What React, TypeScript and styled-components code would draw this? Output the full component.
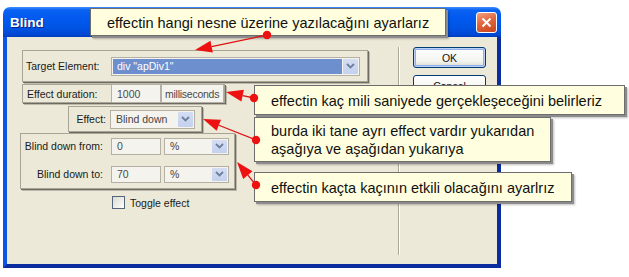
import styled, { createGlobalStyle } from 'styled-components';

const GlobalStyle = createGlobalStyle`
  html, body {
    margin: 0;
    padding: 0;
    background: #ffffff;
  }
`;

// ─── Window chrome ────────────────────────────────────────────────────────────

const Page = styled.div`
  position: relative;
  width: 629px;
  height: 277px;
  padding: 7px 0 0 3px;
  box-sizing: border-box;
  overflow: hidden;
  background: #ffffff;
  font-family: 'Liberation Sans', Arial, sans-serif;
`;

const Window = styled.div`
  width: 498px;
  height: 261px;
  display: flex;
  flex-direction: column;
  border-radius: 7px 7px 0 0;
  overflow: hidden;
`;

const TitleBar = styled.div`
  height: 30px;
  flex: none;
  display: flex;
  align-items: center;
  justify-content: space-between;
  padding: 0 4px 0 7px;
  background: linear-gradient(
    180deg,
    #3d8fff 0%,
    #0a62f2 10%,
    #0058ee 40%,
    #0054e3 70%,
    #0048d4 92%,
    #003cb8 100%
  );
`;

const Title = styled.span`
  color: #ffffff;
  font: bold 13.5px 'Liberation Sans', Arial, sans-serif;
  text-shadow: 1px 1px 0 #0a1e8c;
`;

const CloseButton = styled.div`
  width: 21px;
  height: 21px;
  box-sizing: border-box;
  border: 1px solid #ffffff;
  border-radius: 3px;
  background: linear-gradient(160deg, #f0a283 0%, #e2673f 45%, #c8431c 100%);
  display: flex;
  align-items: center;
  justify-content: center;
`;

const Frame = styled.div`
  flex: 1;
  display: flex;
  border-left: 4px solid #0b55e6;
  border-right: 4px solid #0a2c9f;
  border-bottom: 4px solid #0a2c9f;
  background: #ece9d8;
`;

const LeftCol = styled.div`
  width: 391px;
  flex: none;
  padding-top: 13px;
  box-sizing: border-box;
  font-size: 10.5px;
  color: #1a1a1a;
`;

const Separator = styled.div`
  width: 0;
  margin: 10px 0 9px;
  border-left: 1px solid #aca899;
  border-right: 1px solid #ffffff;
`;

const RightCol = styled.div`
  display: flex;
  flex-direction: column;
  gap: 7px;
  padding: 10px 0 0 13px;
`;

const Button = styled.div<{ $default?: boolean }>`
  width: 73px;
  height: 21px;
  box-sizing: border-box;
  border: 1px solid #003c74;
  border-radius: 3px;
  background: linear-gradient(180deg, #ffffff 0%, #f3f3ef 70%, #dcd8cc 100%);
  box-shadow: ${({ $default }) => ($default ? 'inset 0 0 0 1px #bcd0f5, inset 0 0 0 2px #8fb0ea' : 'none')};
  display: flex;
  align-items: center;
  justify-content: center;
  font-size: 10.5px;
  color: #111;
`;

// ─── Form parts ───────────────────────────────────────────────────────────────

const Panel = styled.div<{ $left: number; $top: number; $w: number; $h: number }>`
  margin: ${({ $top }) => $top}px 0 0 ${({ $left }) => $left}px;
  width: ${({ $w }) => $w}px;
  height: ${({ $h }) => $h}px;
  box-sizing: border-box;
  border: 1px solid #a8a597;
  box-shadow: 1px 1px 0 #6e6c62, 2px 2px 0 #bdb9aa;
  display: flex;
  align-items: center;
`;

const StackPanel = styled(Panel)`
  flex-direction: column;
  align-items: stretch;
  justify-content: flex-start;
  gap: 10px;
  padding-top: 3px;
`;

const Label = styled.span<{ $w: number; $align?: string; $pad?: number }>`
  width: ${({ $w }) => $w}px;
  flex: none;
  text-align: ${({ $align }) => $align ?? 'left'};
  padding-left: ${({ $pad }) => $pad ?? 0}px;
  box-sizing: border-box;
  white-space: nowrap;
`;

const FieldRow = styled.div`
  display: flex;
  align-items: center;
  height: 18px;
`;

const Box = styled.div<{ $w: number; $h?: number; $ml?: number; $pad?: number; $tight?: boolean }>`
  width: ${({ $w }) => $w}px;
  height: ${({ $h }) => $h ?? 17}px;
  margin-left: ${({ $ml }) => $ml ?? 0}px;
  flex: none;
  box-sizing: border-box;
  border: 1px solid #b4b1a4;
  background: #f4f3ee;
  color: #4a4a4a;
  display: flex;
  align-items: center;
  padding-left: ${({ $pad }) => $pad ?? 5}px;
  letter-spacing: ${({ $tight }) => ($tight ? '-0.25px' : 'normal')};
  white-space: nowrap;
  overflow: hidden;
`;

const Select = styled.div<{ $w: number; $h?: number; $ml?: number }>`
  width: ${({ $w }) => $w}px;
  height: ${({ $h }) => $h ?? 17}px;
  margin-left: ${({ $ml }) => $ml ?? 0}px;
  flex: none;
  box-sizing: border-box;
  border: 1px solid #b4b1a4;
  background: #f4f3ee;
  display: flex;
  align-items: stretch;
  padding: 1px;
`;

const SelectText = styled.div<{ $selected?: boolean }>`
  flex: 1;
  display: flex;
  align-items: center;
  padding-left: 4px;
  background: ${({ $selected }) => ($selected ? '#6e8fcd' : 'transparent')};
  color: ${({ $selected }) => ($selected ? '#ffffff' : '#444')};
  white-space: nowrap;
`;

const DropButton = styled.div`
  width: 15px;
  flex: none;
  margin-left: 1px;
  background: linear-gradient(180deg, #d4ddf2 0%, #c4d1ee 100%);
  border-radius: 1px;
  display: flex;
  align-items: center;
  justify-content: center;
`;

const CheckRow = styled.div`
  display: flex;
  align-items: center;
  gap: 5px;
  margin: 7px 0 0 105px;
  height: 13px;
`;

const CheckBox = styled.div`
  width: 13px;
  height: 13px;
  box-sizing: border-box;
  border: 1px solid #55657c;
  background: linear-gradient(135deg, #dcdcd6 0%, #f6f6f3 80%, #ffffff 100%);
`;

// ─── Annotations ──────────────────────────────────────────────────────────────

const Callout = styled.div<{ $x: number; $y: number; $w: number; $h: number }>`
  position: absolute;
  left: ${({ $x }) => $x}px;
  top: ${({ $y }) => $y}px;
  width: ${({ $w }) => $w}px;
  height: ${({ $h }) => $h}px;
  box-sizing: border-box;
  padding: 1px 0 0 16px;
  background: #ffffdf;
  border: 1px solid #6d6d6d;
  box-shadow: 2px 2px 0 #8c8c8c, 3px 3px 2px rgba(0, 0, 0, 0.25);
  display: flex;
  flex-direction: column;
  justify-content: center;
  font: 14.5px/18px 'Liberation Sans', Arial, sans-serif;
  color: #111;
  white-space: nowrap;
`;

const Overlay = styled.svg`
  position: absolute;
  left: 0;
  top: 0;
  pointer-events: none;
`;

function Chevron() {
  return (
    <svg width="9" height="6" viewBox="0 0 9 6">
      <path d="M1 1 L4.5 4.5 L8 1" fill="none" stroke="#6f7f9e" strokeWidth="1.8" />
    </svg>
  );
}

function Arrow({ from, to }: { from: [number, number]; to: [number, number] }) {
  const dx = to[0] - from[0];
  const dy = to[1] - from[1];
  const len = Math.hypot(dx, dy);
  const ux = dx / len;
  const uy = dy / len;
  const bx = to[0] - ux * 17;
  const by = to[1] - uy * 17;
  const px = -uy * 6;
  const py = ux * 6;
  const pts = `${to[0]},${to[1]} ${bx + px},${by + py} ${bx - px},${by - py}`;
  return (
    <g>
      <line x1={from[0]} y1={from[1]} x2={bx} y2={by} stroke="#e01010" strokeWidth="1.3" />
      <polygon points={pts} fill="#ee1111" />
      <circle cx={from[0]} cy={from[1]} r="4.2" fill="#ee1111" />
    </g>
  );
}

// ─── Page ─────────────────────────────────────────────────────────────────────

export default function App() {
  return (
    <Page>
      <GlobalStyle />
      <Window>
        <TitleBar>
          <Title>Blind</Title>
          <CloseButton>
            <svg width="11" height="11" viewBox="0 0 11 11">
              <path d="M1.5 1.5 L9.5 9.5 M9.5 1.5 L1.5 9.5" stroke="#fff" strokeWidth="2" />
            </svg>
          </CloseButton>
        </TitleBar>
        <Frame>
          <LeftCol>
            <Panel $left={15} $top={0} $w={346} $h={32}>
              <Label $w={88} $pad={3}>Target Element:</Label>
              <Select $w={249} $h={19}>
                <SelectText $selected>div "apDiv1"</SelectText>
                <DropButton><Chevron /></DropButton>
              </Select>
            </Panel>

            <Panel $left={15} $top={2} $w={203} $h={19}>
              <Label $w={88} $pad={4}>Effect duration:</Label>
              <Box $w={50} $h={19}>1000</Box>
              <Box $w={63} $h={19} $pad={3} $tight>milliseconds</Box>
            </Panel>

            <Panel $left={61} $top={3} $w={134} $h={26}>
              <Label $w={37} $align="right">Effect:</Label>
              <Select $w={85} $h={19} $ml={4}>
                <SelectText>Blind down</SelectText>
                <DropButton><Chevron /></DropButton>
              </Select>
            </Panel>

            <StackPanel $left={13} $top={1} $w={215} $h={56}>
              <FieldRow>
                <Label $w={82} $align="right">Blind down from:</Label>
                <Box $w={50} $ml={8}>0</Box>
                <Select $w={65} $ml={3}>
                  <SelectText>%</SelectText>
                  <DropButton><Chevron /></DropButton>
                </Select>
              </FieldRow>
              <FieldRow>
                <Label $w={82} $align="right">Blind down to:</Label>
                <Box $w={50} $ml={8}>70</Box>
                <Select $w={65} $ml={3}>
                  <SelectText>%</SelectText>
                  <DropButton><Chevron /></DropButton>
                </Select>
              </FieldRow>
            </StackPanel>

            <CheckRow>
              <CheckBox />
              <span>Toggle effect</span>
            </CheckRow>
          </LeftCol>
          <Separator />
          <RightCol>
            <Button $default>OK</Button>
            <Button>Cancel</Button>
            <Button>Help</Button>
          </RightCol>
        </Frame>
      </Window>

      <Callout $x={90} $y={8} $w={356} $h={28}>
        effectin hangi nesne üzerine yazılacağını ayarlarız
      </Callout>
      <Callout $x={254} $y={85} $w={371} $h={30}>
        effectin kaç mili saniyede gerçekleşeceğini belirleriz
      </Callout>
      <Callout $x={254} $y={117} $w={297} $h={45}>
        <span>burda iki tane ayrı effect vardır yukarıdan</span>
        <span>aşağıya ve aşağıdan yukarıya</span>
      </Callout>
      <Callout $x={254} $y={172} $w={318} $h={30}>
        effectin kaçta kaçının etkili olacağını ayarlrız
      </Callout>

      <Overlay width="629" height="277" viewBox="0 0 629 277">
        <Arrow from={[267, 35]} to={[195, 50]} />
        <Arrow from={[254, 98]} to={[226, 92]} />
        <Arrow from={[256, 140]} to={[203, 119]} />
        <Arrow from={[256, 185]} to={[237, 162]} />
      </Overlay>
    </Page>
  );
}
